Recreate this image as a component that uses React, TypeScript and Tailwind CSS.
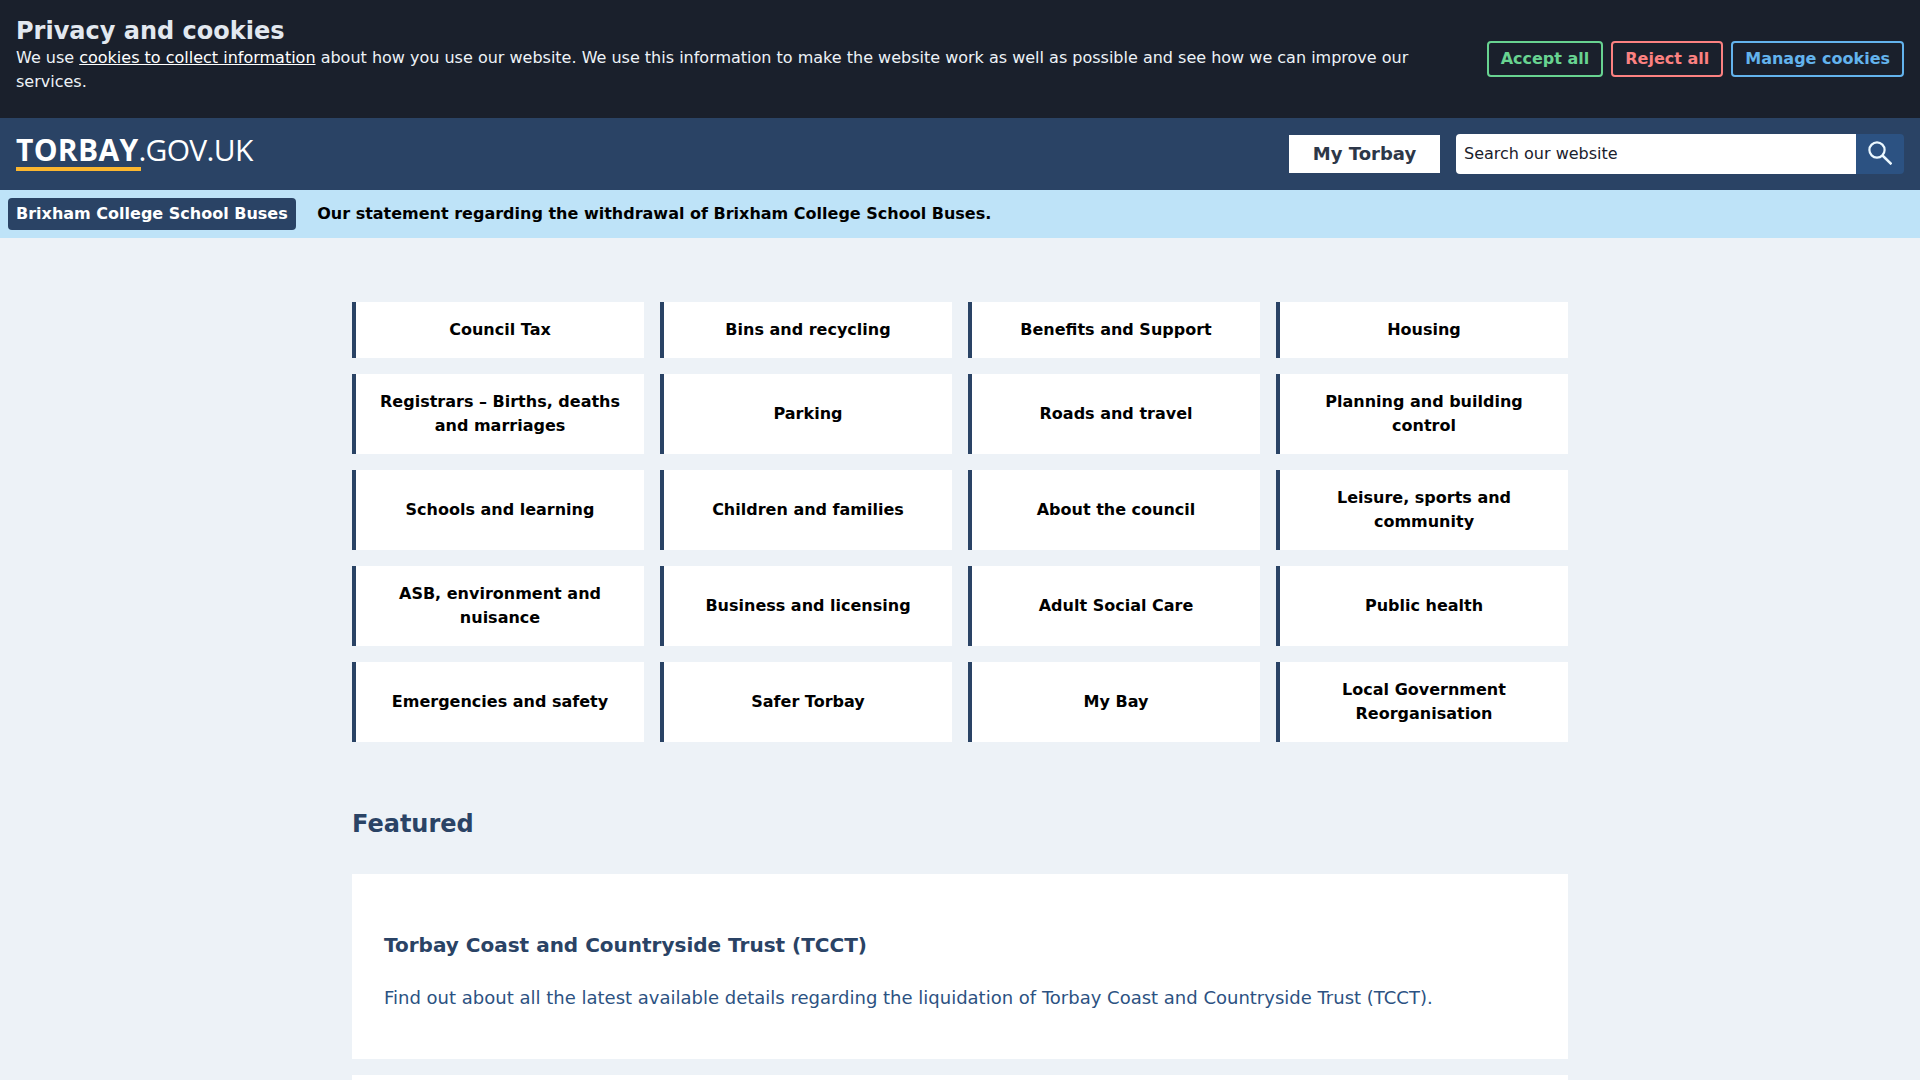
const items = [
  ["Council Tax", "Bins and recycling", "Benefits and Support", "Housing"],
  ["Registrars – Births, deaths and marriages", "Parking", "Roads and travel", "Planning and building control"],
  ["Schools and learning", "Children and families", "About the council", "Leisure, sports and community"],
  ["ASB, environment and nuisance", "Business and licensing", "Adult Social Care", "Public health"],
  ["Emergencies and safety", "Safer Torbay", "My Bay", "Local Government Reorganisation"],
].flat();

const rows = ["h-14", "h-20", "h-20", "h-20", "h-20"];

export default function App() {
  return (
    <div className="h-screen overflow-hidden bg-[#edf2f7] text-base text-black font-['DejaVu_Sans',sans-serif]">
      <section className="flex h-[118px] bg-[#1a202c] pl-4 pr-4">
        <div className="flex-1 pr-8 pt-4">
          <h2 className="text-2xl leading-[30px] font-bold text-[#e2e8f0]">Privacy and cookies</h2>
          <p className="text-base leading-6 text-[#edf2f7]">
            We use <a className="underline text-white" href="#">cookies to collect information</a> about how you use our website. We use this information to make the website work as well as possible and see how we can improve our services.
          </p>
        </div>
        <div className="flex gap-2 pt-[41px]">
          <button className="h-9 px-[12px] border-2 border-[#68d391] rounded font-bold text-[#68d391]">Accept all</button>
          <button className="h-9 px-[12px] border-2 border-[#fc8181] rounded font-bold text-[#fc8181]">Reject all</button>
          <button className="h-9 px-[12px] border-2 border-[#63b3ed] rounded font-bold text-[#63b3ed]">Manage cookies</button>
        </div>
      </section>

      <header className="flex items-center h-[72px] bg-[#2a4365] pl-4 pr-4">
        <a href="#" className="relative block text-white font-['Open_Sans',sans-serif] text-[30px] leading-[40px] -mt-[9px]">
          <span className="font-bold tracking-[0.3px]">TORBAY</span><span className="font-normal tracking-[-0.7px]">.GOV.UK</span>
          <span className="absolute left-0 top-[37.5px] h-1 w-[125px] bg-[#fbb62f]" />
        </a>
        <a href="#" className="ml-auto flex items-center justify-center w-[151px] h-[38px] bg-white text-lg font-bold text-[#2d3748]">My Torbay</a>
        <div className="flex ml-4 h-10">
          <input readOnly placeholder="Search our website" className="w-[400px] h-10 bg-white rounded-l pl-2 pb-0.5 text-base text-[#1a202c] placeholder:text-[#1a202c] outline-none" />
          <button className="flex items-center justify-center w-12 h-10 bg-[#2c5282] rounded-r">
            <svg className="-mt-0.5" width="24" height="24" viewBox="0 0 24 24" fill="none" stroke="#ebf8ff">
              <circle cx="9" cy="9" r="7.6" strokeWidth="2.2" />
              <path d="M14.5 14.5l9 8.8" strokeWidth="2.5" />
            </svg>
          </button>
        </div>
      </header>

      <div className="flex items-center h-12 bg-[#bee3f8] pl-2">
        <span className="flex items-center h-8 px-2 rounded bg-[#2a4365] text-white font-bold">Brixham College School Buses</span>
        <span className="ml-[21.5px] font-bold">Our statement regarding the withdrawal of Brixham College School Buses.</span>
      </div>

      <main className="w-[1216px] mx-auto pt-16">
        <div className="grid grid-cols-4 gap-4">
          {items.map((t, i) => (
            <a key={t} href="#" className={`flex items-center justify-center ${rows[Math.floor(i / 4)]} bg-white border-l-4 border-[#2a4365] px-4 text-center font-bold leading-6`}>
              {t}
            </a>
          ))}
        </div>

        <h2 className="mt-[64px] mb-[32px] text-2xl leading-9 font-bold text-[#2a4365]">Featured</h2>

        <a href="#" className="block h-[185px] bg-white px-8 pt-[56px]">
          <h3 className="text-xl leading-[30px] font-bold text-[#2a4365]">Torbay Coast and Countryside Trust (TCCT)</h3>
          <p className="mt-6 text-lg leading-[27px] text-[#2c5282]">Find out about all the latest available details regarding the liquidation of Torbay Coast and Countryside Trust (TCCT).</p>
        </a>
        <div className="mt-4 h-[185px] bg-white" />
      </main>
    </div>
  );
}
